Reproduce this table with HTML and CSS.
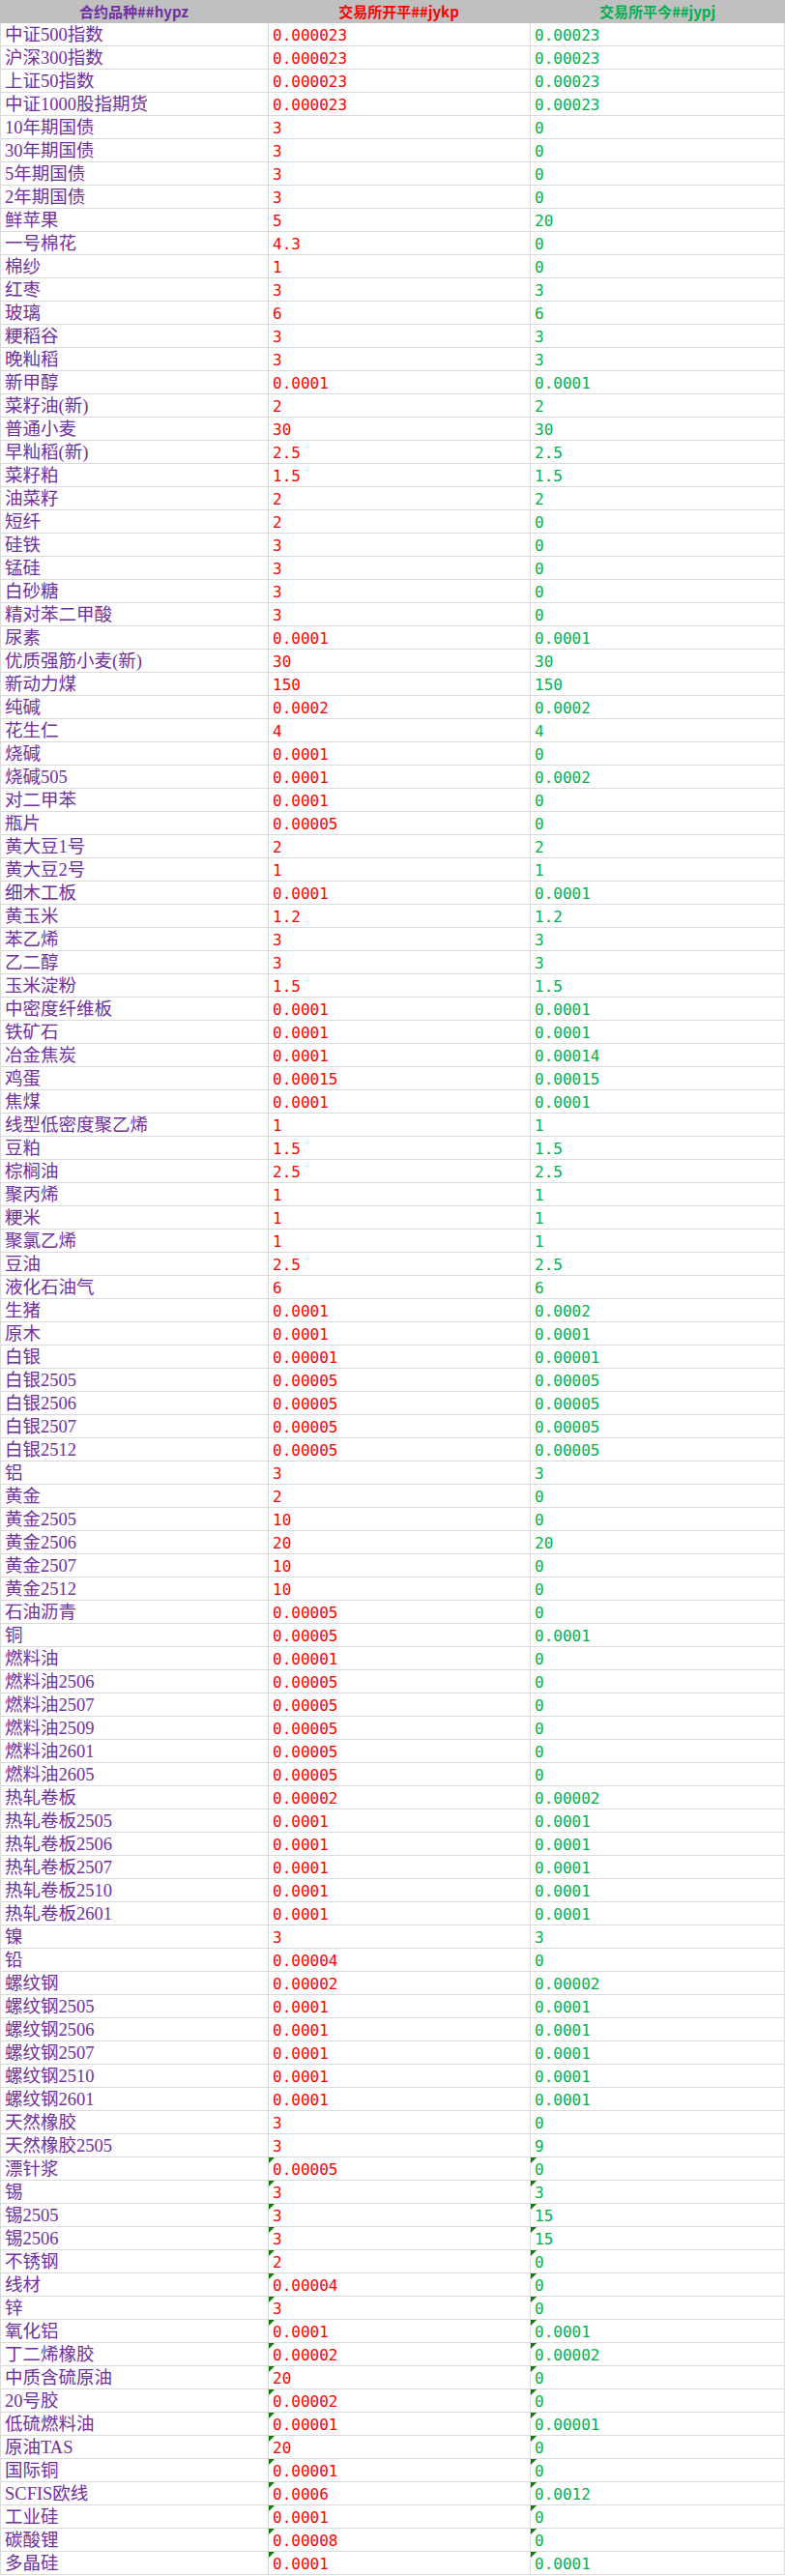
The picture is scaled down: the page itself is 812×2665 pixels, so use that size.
FILE: index.html
```html
<!DOCTYPE html>
<html lang="zh-CN">
<head>
<meta charset="utf-8">
<title>合约品种</title>
<link rel="stylesheet" href="styles.css">
</head>
<body>
<div class="sheet">
<div class="row head"><div class="h h1">合约品种##hypz</div><div class="h h2">交易所开平##jykp</div><div class="h h3">交易所平今##jypj</div></div>
<div class="row"><div class="c name">中证500指数</div><div class="c kp">0.000023</div><div class="c pj">0.00023</div></div>
<div class="row"><div class="c name">沪深300指数</div><div class="c kp">0.000023</div><div class="c pj">0.00023</div></div>
<div class="row"><div class="c name">上证50指数</div><div class="c kp">0.000023</div><div class="c pj">0.00023</div></div>
<div class="row"><div class="c name">中证1000股指期货</div><div class="c kp">0.000023</div><div class="c pj">0.00023</div></div>
<div class="row"><div class="c name">10年期国债</div><div class="c kp">3</div><div class="c pj">0</div></div>
<div class="row"><div class="c name">30年期国债</div><div class="c kp">3</div><div class="c pj">0</div></div>
<div class="row"><div class="c name">5年期国债</div><div class="c kp">3</div><div class="c pj">0</div></div>
<div class="row"><div class="c name">2年期国债</div><div class="c kp">3</div><div class="c pj">0</div></div>
<div class="row"><div class="c name">鲜苹果</div><div class="c kp">5</div><div class="c pj">20</div></div>
<div class="row"><div class="c name">一号棉花</div><div class="c kp">4.3</div><div class="c pj">0</div></div>
<div class="row"><div class="c name">棉纱</div><div class="c kp">1</div><div class="c pj">0</div></div>
<div class="row"><div class="c name">红枣</div><div class="c kp">3</div><div class="c pj">3</div></div>
<div class="row"><div class="c name">玻璃</div><div class="c kp">6</div><div class="c pj">6</div></div>
<div class="row"><div class="c name">粳稻谷</div><div class="c kp">3</div><div class="c pj">3</div></div>
<div class="row"><div class="c name">晚籼稻</div><div class="c kp">3</div><div class="c pj">3</div></div>
<div class="row"><div class="c name">新甲醇</div><div class="c kp">0.0001</div><div class="c pj">0.0001</div></div>
<div class="row"><div class="c name">菜籽油(新)</div><div class="c kp">2</div><div class="c pj">2</div></div>
<div class="row"><div class="c name">普通小麦</div><div class="c kp">30</div><div class="c pj">30</div></div>
<div class="row"><div class="c name">早籼稻(新)</div><div class="c kp">2.5</div><div class="c pj">2.5</div></div>
<div class="row"><div class="c name">菜籽粕</div><div class="c kp">1.5</div><div class="c pj">1.5</div></div>
<div class="row"><div class="c name">油菜籽</div><div class="c kp">2</div><div class="c pj">2</div></div>
<div class="row"><div class="c name">短纤</div><div class="c kp">2</div><div class="c pj">0</div></div>
<div class="row"><div class="c name">硅铁</div><div class="c kp">3</div><div class="c pj">0</div></div>
<div class="row"><div class="c name">锰硅</div><div class="c kp">3</div><div class="c pj">0</div></div>
<div class="row"><div class="c name">白砂糖</div><div class="c kp">3</div><div class="c pj">0</div></div>
<div class="row"><div class="c name">精对苯二甲酸</div><div class="c kp">3</div><div class="c pj">0</div></div>
<div class="row"><div class="c name">尿素</div><div class="c kp">0.0001</div><div class="c pj">0.0001</div></div>
<div class="row"><div class="c name">优质强筋小麦(新)</div><div class="c kp">30</div><div class="c pj">30</div></div>
<div class="row"><div class="c name">新动力煤</div><div class="c kp">150</div><div class="c pj">150</div></div>
<div class="row"><div class="c name">纯碱</div><div class="c kp">0.0002</div><div class="c pj">0.0002</div></div>
<div class="row"><div class="c name">花生仁</div><div class="c kp">4</div><div class="c pj">4</div></div>
<div class="row"><div class="c name">烧碱</div><div class="c kp">0.0001</div><div class="c pj">0</div></div>
<div class="row"><div class="c name">烧碱505</div><div class="c kp">0.0001</div><div class="c pj">0.0002</div></div>
<div class="row"><div class="c name">对二甲苯</div><div class="c kp">0.0001</div><div class="c pj">0</div></div>
<div class="row"><div class="c name">瓶片</div><div class="c kp">0.00005</div><div class="c pj">0</div></div>
<div class="row"><div class="c name">黄大豆1号</div><div class="c kp">2</div><div class="c pj">2</div></div>
<div class="row"><div class="c name">黄大豆2号</div><div class="c kp">1</div><div class="c pj">1</div></div>
<div class="row"><div class="c name">细木工板</div><div class="c kp">0.0001</div><div class="c pj">0.0001</div></div>
<div class="row"><div class="c name">黄玉米</div><div class="c kp">1.2</div><div class="c pj">1.2</div></div>
<div class="row"><div class="c name">苯乙烯</div><div class="c kp">3</div><div class="c pj">3</div></div>
<div class="row"><div class="c name">乙二醇</div><div class="c kp">3</div><div class="c pj">3</div></div>
<div class="row"><div class="c name">玉米淀粉</div><div class="c kp">1.5</div><div class="c pj">1.5</div></div>
<div class="row"><div class="c name">中密度纤维板</div><div class="c kp">0.0001</div><div class="c pj">0.0001</div></div>
<div class="row"><div class="c name">铁矿石</div><div class="c kp">0.0001</div><div class="c pj">0.0001</div></div>
<div class="row"><div class="c name">冶金焦炭</div><div class="c kp">0.0001</div><div class="c pj">0.00014</div></div>
<div class="row"><div class="c name">鸡蛋</div><div class="c kp">0.00015</div><div class="c pj">0.00015</div></div>
<div class="row"><div class="c name">焦煤</div><div class="c kp">0.0001</div><div class="c pj">0.0001</div></div>
<div class="row"><div class="c name">线型低密度聚乙烯</div><div class="c kp">1</div><div class="c pj">1</div></div>
<div class="row"><div class="c name">豆粕</div><div class="c kp">1.5</div><div class="c pj">1.5</div></div>
<div class="row"><div class="c name">棕榈油</div><div class="c kp">2.5</div><div class="c pj">2.5</div></div>
<div class="row"><div class="c name">聚丙烯</div><div class="c kp">1</div><div class="c pj">1</div></div>
<div class="row"><div class="c name">粳米</div><div class="c kp">1</div><div class="c pj">1</div></div>
<div class="row"><div class="c name">聚氯乙烯</div><div class="c kp">1</div><div class="c pj">1</div></div>
<div class="row"><div class="c name">豆油</div><div class="c kp">2.5</div><div class="c pj">2.5</div></div>
<div class="row"><div class="c name">液化石油气</div><div class="c kp">6</div><div class="c pj">6</div></div>
<div class="row"><div class="c name">生猪</div><div class="c kp">0.0001</div><div class="c pj">0.0002</div></div>
<div class="row"><div class="c name">原木</div><div class="c kp">0.0001</div><div class="c pj">0.0001</div></div>
<div class="row"><div class="c name">白银</div><div class="c kp">0.00001</div><div class="c pj">0.00001</div></div>
<div class="row"><div class="c name">白银2505</div><div class="c kp">0.00005</div><div class="c pj">0.00005</div></div>
<div class="row"><div class="c name">白银2506</div><div class="c kp">0.00005</div><div class="c pj">0.00005</div></div>
<div class="row"><div class="c name">白银2507</div><div class="c kp">0.00005</div><div class="c pj">0.00005</div></div>
<div class="row"><div class="c name">白银2512</div><div class="c kp">0.00005</div><div class="c pj">0.00005</div></div>
<div class="row"><div class="c name">铝</div><div class="c kp">3</div><div class="c pj">3</div></div>
<div class="row"><div class="c name">黄金</div><div class="c kp">2</div><div class="c pj">0</div></div>
<div class="row"><div class="c name">黄金2505</div><div class="c kp">10</div><div class="c pj">0</div></div>
<div class="row"><div class="c name">黄金2506</div><div class="c kp">20</div><div class="c pj">20</div></div>
<div class="row"><div class="c name">黄金2507</div><div class="c kp">10</div><div class="c pj">0</div></div>
<div class="row"><div class="c name">黄金2512</div><div class="c kp">10</div><div class="c pj">0</div></div>
<div class="row"><div class="c name">石油沥青</div><div class="c kp">0.00005</div><div class="c pj">0</div></div>
<div class="row"><div class="c name">铜</div><div class="c kp">0.00005</div><div class="c pj">0.0001</div></div>
<div class="row"><div class="c name">燃料油</div><div class="c kp">0.00001</div><div class="c pj">0</div></div>
<div class="row"><div class="c name">燃料油2506</div><div class="c kp">0.00005</div><div class="c pj">0</div></div>
<div class="row"><div class="c name">燃料油2507</div><div class="c kp">0.00005</div><div class="c pj">0</div></div>
<div class="row"><div class="c name">燃料油2509</div><div class="c kp">0.00005</div><div class="c pj">0</div></div>
<div class="row"><div class="c name">燃料油2601</div><div class="c kp">0.00005</div><div class="c pj">0</div></div>
<div class="row"><div class="c name">燃料油2605</div><div class="c kp">0.00005</div><div class="c pj">0</div></div>
<div class="row"><div class="c name">热轧卷板</div><div class="c kp">0.00002</div><div class="c pj">0.00002</div></div>
<div class="row"><div class="c name">热轧卷板2505</div><div class="c kp">0.0001</div><div class="c pj">0.0001</div></div>
<div class="row"><div class="c name">热轧卷板2506</div><div class="c kp">0.0001</div><div class="c pj">0.0001</div></div>
<div class="row"><div class="c name">热轧卷板2507</div><div class="c kp">0.0001</div><div class="c pj">0.0001</div></div>
<div class="row"><div class="c name">热轧卷板2510</div><div class="c kp">0.0001</div><div class="c pj">0.0001</div></div>
<div class="row"><div class="c name">热轧卷板2601</div><div class="c kp">0.0001</div><div class="c pj">0.0001</div></div>
<div class="row"><div class="c name">镍</div><div class="c kp">3</div><div class="c pj">3</div></div>
<div class="row"><div class="c name">铅</div><div class="c kp">0.00004</div><div class="c pj">0</div></div>
<div class="row"><div class="c name">螺纹钢</div><div class="c kp">0.00002</div><div class="c pj">0.00002</div></div>
<div class="row"><div class="c name">螺纹钢2505</div><div class="c kp">0.0001</div><div class="c pj">0.0001</div></div>
<div class="row"><div class="c name">螺纹钢2506</div><div class="c kp">0.0001</div><div class="c pj">0.0001</div></div>
<div class="row"><div class="c name">螺纹钢2507</div><div class="c kp">0.0001</div><div class="c pj">0.0001</div></div>
<div class="row"><div class="c name">螺纹钢2510</div><div class="c kp">0.0001</div><div class="c pj">0.0001</div></div>
<div class="row"><div class="c name">螺纹钢2601</div><div class="c kp">0.0001</div><div class="c pj">0.0001</div></div>
<div class="row"><div class="c name">天然橡胶</div><div class="c kp">3</div><div class="c pj">0</div></div>
<div class="row"><div class="c name">天然橡胶2505</div><div class="c kp">3</div><div class="c pj">9</div></div>
<div class="row"><div class="c name">漂针浆</div><div class="c kp flag">0.00005</div><div class="c pj flag">0</div></div>
<div class="row"><div class="c name">锡</div><div class="c kp flag">3</div><div class="c pj flag">3</div></div>
<div class="row"><div class="c name">锡2505</div><div class="c kp flag">3</div><div class="c pj flag">15</div></div>
<div class="row"><div class="c name">锡2506</div><div class="c kp flag">3</div><div class="c pj flag">15</div></div>
<div class="row"><div class="c name">不锈钢</div><div class="c kp flag">2</div><div class="c pj flag">0</div></div>
<div class="row"><div class="c name">线材</div><div class="c kp flag">0.00004</div><div class="c pj flag">0</div></div>
<div class="row"><div class="c name">锌</div><div class="c kp flag">3</div><div class="c pj flag">0</div></div>
<div class="row"><div class="c name">氧化铝</div><div class="c kp flag">0.0001</div><div class="c pj flag">0.0001</div></div>
<div class="row"><div class="c name">丁二烯橡胶</div><div class="c kp flag">0.00002</div><div class="c pj flag">0.00002</div></div>
<div class="row"><div class="c name">中质含硫原油</div><div class="c kp flag">20</div><div class="c pj flag">0</div></div>
<div class="row"><div class="c name">20号胶</div><div class="c kp flag">0.00002</div><div class="c pj flag">0</div></div>
<div class="row"><div class="c name">低硫燃料油</div><div class="c kp flag">0.00001</div><div class="c pj flag">0.00001</div></div>
<div class="row"><div class="c name">原油TAS</div><div class="c kp flag">20</div><div class="c pj flag">0</div></div>
<div class="row"><div class="c name">国际铜</div><div class="c kp flag">0.00001</div><div class="c pj flag">0</div></div>
<div class="row"><div class="c name">SCFIS欧线</div><div class="c kp flag">0.0006</div><div class="c pj flag">0.0012</div></div>
<div class="row"><div class="c name">工业硅</div><div class="c kp flag">0.0001</div><div class="c pj flag">0</div></div>
<div class="row"><div class="c name">碳酸锂</div><div class="c kp flag">0.00008</div><div class="c pj flag">0</div></div>
<div class="row"><div class="c name">多晶硅</div><div class="c kp flag">0.0001</div><div class="c pj flag">0.0001</div></div>
</div>
</body>
</html>
```
FILE: styles.css
```css
html, body {
  margin: 0;
  padding: 0;
  background: #ffffff;
}

.sheet {
  width: 812px;
}

.row {
  display: grid;
  grid-template-columns: 277px 271px 264px;
  height: 24px;
  box-sizing: border-box;
  border-bottom: 1px solid #dadada;
}

.row.head {
  background: #c0c0c0;
  border-bottom: none;
}

.h {
  display: flex;
  align-items: center;
  justify-content: center;
  font-family: "Noto Sans CJK SC", "Noto Sans", sans-serif;
  font-size: 15px;
  font-weight: 700;
  line-height: 24px;
}

.h1 { color: #7030a0; }
.h2 { color: #ff0000; }
.h3 { color: #00b050; }

.c {
  position: relative;
  box-sizing: border-box;
  border-left: 1px solid #dadada;
  padding-left: 4px;
  display: flex;
  align-items: flex-end;
  font-family: "Liberation Serif", "Noto Sans CJK SC", serif;
  font-size: 18.5px;
  line-height: 22px;
  white-space: nowrap;
  overflow: hidden;
}

.c.kp,
.c.pj {
  font-family: "DejaVu Sans Mono", "Liberation Mono", monospace;
  font-size: 16px;
  line-height: 21px;
}

.c.pj {
  border-right: 1px solid #dadada;
}

.name { color: #7030a0; }
.kp { color: #ff0000; }
.pj { color: #00b050; }

.flag::before {
  content: "";
  position: absolute;
  left: 0;
  top: 0;
  width: 0;
  height: 0;
  border-top: 6px solid #0b7a0b;
  border-right: 6px solid transparent;
}
```
